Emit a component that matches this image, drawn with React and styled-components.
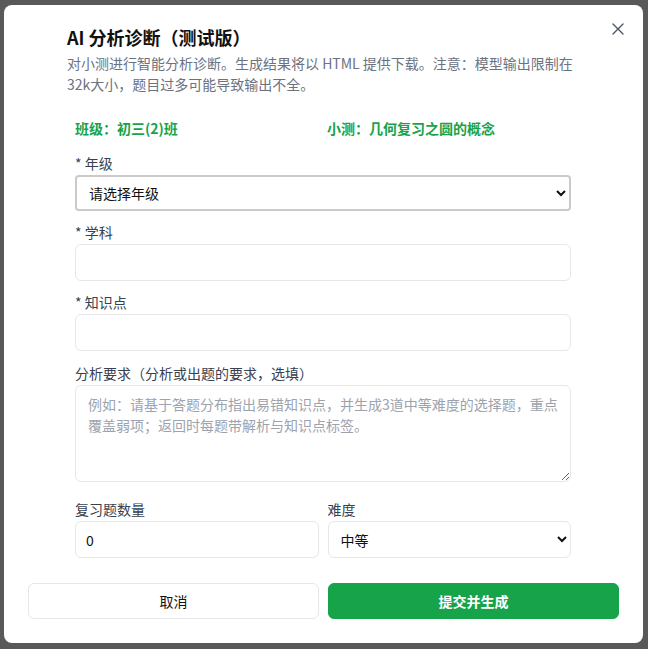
import React from 'react'
import styled, { createGlobalStyle } from 'styled-components'

const Global = createGlobalStyle`
    html, body {
        margin: 0;
        padding: 0;
        background: #595959;
        font-family: "Noto Sans CJK SC", "Noto Sans", sans-serif;
    }
    * { box-sizing: border-box; }
`

const Overlay = styled.div`
    width: 648px;
    height: 649px;
    padding: 5px 5px 6px 4px;
    background: #595959;
`

const Modal = styled.div`
    position: relative;
    width: 639px;
    height: 638px;
    background: #fff;
    border-radius: 8px;
    padding: 21px 24px 0 24px;
    display: flex;
    flex-direction: column;
`

const Close = styled.button`
    position: absolute;
    top: 14px;
    right: 15px;
    width: 20px;
    height: 20px;
    padding: 0;
    border: none;
    background: none;
    color: #4b5563;
    display: flex;
    align-items: center;
    justify-content: center;
`

const Header = styled.div`
    margin-left: 39px;
    margin-right: 40px;
`

const Title = styled.h2`
    margin: 0;
    font-size: 18px;
    line-height: 22px;
    font-weight: 700;
    color: #111;
`

const Desc = styled.p`
    margin: 5px 0 0;
    font-size: 14px;
    line-height: 21px;
    color: #6b7280;
`

const Body = styled.div`
    margin: 0 48px 0 47px;
`

const Info = styled.div`
    display: grid;
    grid-template-columns: 1fr 1fr;
    gap: 8px;
    margin-top: 23px;
    margin-bottom: 15px;
    font-size: 14px;
    line-height: 20px;
    font-weight: 700;
    color: #16a34a;
`

const Field = styled.div`
    margin-bottom: ${p => p.$gap ?? 11}px;
`

const Label = styled.div`
    font-size: 14px;
    line-height: 20px;
    color: #374151;
    margin-bottom: 2px;
`

const control = `
    width: 100%;
    font-family: "Noto Sans CJK SC", "Noto Sans", sans-serif;
    font-size: 14px;
    color: #111;
    background: #fff;
    border: 1px solid #e5e7eb;
    border-radius: 6px;
    outline: none;
`

const Input = styled.input`
    ${control}
    height: 37px;
    padding: 0 10px;
`

const Select = styled.select`
    ${control}
    height: ${p => (p.$strong ? 36 : 37)}px;
    padding: 0 8px;
    border: ${p => (p.$strong ? '2px solid #cacaca' : '1px solid #e5e7eb')};
    border-radius: ${p => (p.$strong ? 4 : 6)}px;
`

const TextArea = styled.textarea`
    ${control}
    display: block;
    height: 97px;
    padding: 8px 12px;
    line-height: 21px;
    resize: vertical;
    &::placeholder { color: #9ca3af; }
`

const Row = styled.div`
    display: grid;
    grid-template-columns: 1fr 1fr;
    gap: 9px;
`

const Footer = styled.div`
    display: grid;
    grid-template-columns: 1fr 1fr;
    gap: 9px;
    margin-top: 25px;
`

const Button = styled.button`
    height: 36px;
    border-radius: 6px;
    font-family: "Noto Sans CJK SC", "Noto Sans", sans-serif;
    font-size: 14px;
    font-weight: ${p => (p.$primary ? 700 : 400)};
    color: ${p => (p.$primary ? '#fff' : '#111')};
    background: ${p => (p.$primary ? '#16a34a' : '#fff')};
    border: 1px solid ${p => (p.$primary ? '#16a34a' : '#e5e7eb')};
`

export default function App() {
    return (
        <Overlay>
            <Global />
            <Modal>
                <Close aria-label="关闭">
                    <svg width="12" height="12" viewBox="0 0 12 12">
                        <path d="M1 1L11 11M11 1L1 11" stroke="currentColor" strokeWidth="1.4" strokeLinecap="round" />
                    </svg>
                </Close>
                <Header>
                    <Title>AI 分析诊断（测试版）</Title>
                    <Desc>对小测进行智能分析诊断。生成结果将以 HTML 提供下载。注意：模型输出限制在32k大小，题目过多可能导致输出不全。</Desc>
                </Header>
                <Body>
                    <Info>
                        <div>班级：初三(2)班</div>
                        <div>小测：几何复习之圆的概念</div>
                    </Info>
                    <Field>
                        <Label>* 年级</Label>
                        <Select $strong defaultValue="">
                            <option value="">请选择年级</option>
                        </Select>
                    </Field>
                    <Field>
                        <Label>* 学科</Label>
                        <Input />
                    </Field>
                    <Field $gap={12}>
                        <Label>* 知识点</Label>
                        <Input />
                    </Field>
                    <Field $gap={17}>
                        <Label>分析要求（分析或出题的要求，选填）</Label>
                        <TextArea placeholder="例如：请基于答题分布指出易错知识点，并生成3道中等难度的选择题，重点覆盖弱项；返回时每题带解析与知识点标签。" />
                    </Field>
                    <Row>
                        <Field $gap={0}>
                            <Label>复习题数量</Label>
                            <Input defaultValue="0" />
                        </Field>
                        <Field $gap={0}>
                            <Label>难度</Label>
                            <Select defaultValue="mid">
                                <option value="mid">中等</option>
                            </Select>
                        </Field>
                    </Row>
                </Body>
                <Footer>
                    <Button>取消</Button>
                    <Button $primary>提交并生成</Button>
                </Footer>
            </Modal>
        </Overlay>
    )
}
